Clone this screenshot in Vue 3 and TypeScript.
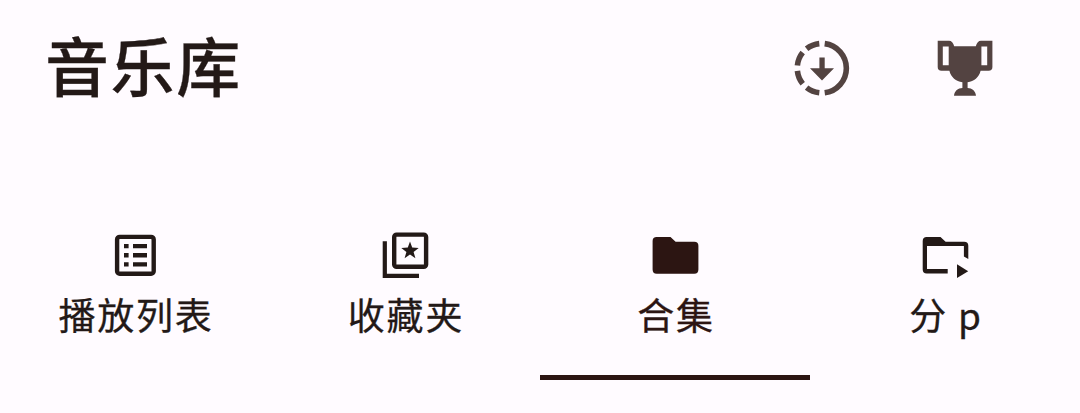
<script setup lang="ts">
import { ref } from 'vue'

type IconName = 'list' | 'favorites' | 'folder' | 'parts'
interface Tab {
  label: string
  icon: IconName
}

const tabs: Tab[] = [
  { label: '播放列表', icon: 'list' },
  { label: '收藏夹', icon: 'favorites' },
  { label: '合集', icon: 'folder' },
  { label: '分 p', icon: 'parts' },
]
const active = ref(2)
</script>

<template>
  <main class="library">
    <header class="bar">
      <h1 class="title">音乐库</h1>
      <div class="actions">
        <button class="action" aria-label="下载">
          <svg viewBox="0 0 56 56">
            <g fill="none" stroke="currentColor" stroke-width="5.6">
              <path d="M30.7 3.6A24.8 24.8 0 0 1 30.7 52.8" />
              <path d="M25.3 3.6A24.8 24.8 0 0 0 12.6 8.8" />
              <path d="M8.7 12.6A24.8 24.8 0 0 0 3.4 25.5" />
              <path d="M3.4 30.9A24.8 24.8 0 0 0 8.7 43.8" />
              <path d="M12.6 47.6A24.8 24.8 0 0 0 25.3 52.8" />
            </g>
            <path fill="currentColor" d="M25.4 17.4h5.3v10.8H40L28 40.4 16 28.2h9.4z" />
          </svg>
        </button>
        <button class="action" aria-label="排行">
          <svg viewBox="0 0 56 56">
            <path
              fill="currentColor"
              fill-rule="evenodd"
              d="M.7.7H12Q15.8.7 17.2 6.3H38.8Q40.2.7 44 .7H55.4V27Q55.4 30.8 51.5 30.8H43.6C42 37.5 37 41.5 30.6 42.3V48C35 48 38.5 51 39 55.7H17C17.5 51 21 48 25.4 48V42.3C19 41.5 14 37.5 12.4 30.8H4.5Q.7 30.8.7 27ZM5.8 6.6V25.2H11.7V6.6ZM44.4 6.6V25.2H50.2V6.6Z"
            />
          </svg>
        </button>
      </div>
    </header>

    <nav class="tabs">
      <button
        v-for="(tab, i) in tabs"
        :key="tab.icon"
        class="tab"
        :class="{ active: i === active }"
        @click="active = i"
      >
        <svg class="icon" viewBox="0 0 56 56">
          <g v-if="tab.icon === 'list'">
            <rect x="10.1" y="9.9" width="36.6" height="36.9" rx="2.6" fill="none" stroke="currentColor" stroke-width="4.4" />
            <path
              fill="currentColor"
              d="M17 17h4.6v4.3H17zM26 17h14v4.3H26zM17 26.1h4.6v4.3H17zM26 26.1h14v4.3H26zM17 35.2h4.6v4.3H17zM26 35.2h14v4.3H26z"
            />
          </g>
          <g v-else-if="tab.icon === 'favorites'">
            <rect x="17.2" y="7.6" width="31.9" height="32.2" rx="2.4" fill="none" stroke="currentColor" stroke-width="4.4" />
            <path fill="none" stroke="currentColor" stroke-width="4.2" d="M7.8 14.3V48.9H42" />
            <path
              fill="currentColor"
              d="M33 14.6l2.2 6 6.5.3-5.1 4 1.8 6.3-5.4-3.6-5.4 3.6 1.8-6.3-5.1-4 6.500-.3z"
            />
          </g>
          <path
            v-else-if="tab.icon === 'folder'"
            fill="currentColor"
            d="M9.7 10H23.5L28.6 14.7H47.3Q51.4 14.700 51.4 18.8V42.5Q51.4 46.7 47.3 46.7H9.7Q5.6 46.7 5.6 42.5V14.1Q5.6 10 9.7 10Z"
          />
          <g v-else fill="currentColor">
            <path
              d="M9.7 10H23.5L28.6 14.7H47.2Q51.3 14.7 51.3 18.8V32L46.9 29.5V19.1H10V42H30.7V46.5H9.7Q5.7 46.5 5.7 42.5V14.1Q5.7 10 9.7 10Z"
            />
            <path d="M40 37.2V51.1L51.2 44.2Z" />
          </g>
        </svg>
        <span class="label">{{ tab.label }}</span>
      </button>
    </nav>
  </main>
</template>

<style scoped>
.library {
  width: 1080px;
  height: 413px;
  overflow: hidden;
  background: #fffbff;
  color: #231917;
  font-family: 'Noto Sans CJK SC', sans-serif;
}
.bar {
  box-sizing: border-box;
  height: 227px;
  padding: 17px 87px 0 45px;
  display: flex;
  justify-content: space-between;
  align-items: flex-start;
}
.title {
  margin: 0;
  font-size: 64px;
  line-height: 92px;
  font-weight: 500;
  letter-spacing: 1.6px;
  -webkit-text-stroke: 0.3px currentColor;
}
.actions {
  display: flex;
  gap: 87px;
  padding-top: 23px;
}
button {
  margin: 0;
  padding: 0;
  border: 0;
  background: none;
  font: inherit;
  color: inherit;
}
.action {
  width: 56px;
  height: 56px;
  color: #534341;
}
svg {
  display: block;
  width: 56px;
  height: 56px;
}
.tabs {
  display: grid;
  grid-template-columns: repeat(4, 270px);
}
.tab {
  box-sizing: border-box;
  height: 153px;
  display: flex;
  flex-direction: column;
  align-items: center;
  border-bottom: 5px solid transparent;
}
.active {
  color: #2c1512;
  border-bottom-color: #2c1512;
}
.label {
  margin-top: 4px;
  padding-left: 2px;
  font-size: 37px;
  line-height: 54px;
  letter-spacing: 1.8px;
  white-space: pre;
  -webkit-text-stroke: 0.3px currentColor;
}
</style>

<style>
body {
  margin: 0;
  background: #fffbff;
}
</style>
